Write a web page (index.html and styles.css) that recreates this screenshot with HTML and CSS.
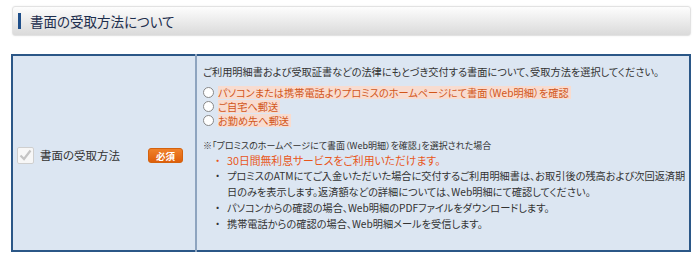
FILE: index.html
```html
<!DOCTYPE html>
<html lang="ja">
<head>
  <meta charset="UTF-8">
  <title>書面の受取方法について</title>
  <link rel="stylesheet" href="styles.css">
</head>
<body>
<div id="page">
  <h2 class="section-title"><span class="title-text">書面の受取方法について</span></h2>

  <table class="form-table">
    <tr>
      <th>
        <div class="label-row">
          <svg class="check-icon" width="17" height="17" viewBox="0 0 17 17">
            <rect x="0.5" y="0.5" width="16" height="16" rx="1.5" fill="#f7f7f7" stroke="#cfcfcf"/>
            <path d="M3.5 8.5 L7 12 L13.5 3.5" fill="none" stroke="#c4c4c4" stroke-width="2.2"/>
          </svg>
          <span class="label-text">書面の受取方法</span>
          <span class="badge">必須</span>
        </div>
      </th>
      <td>
        <p class="intro">ご利用明細書および受取証書などの法律にもとづき交付する書面について、受取方法を選択してください。</p>
        <div class="radio-list">
          <label class="radio-item"><span class="radio"></span><span class="radio-text">パソコンまたは携帯電話よりプロミスのホームページにて書面（Web明細）を確認</span></label>
          <label class="radio-item"><span class="radio"></span><span class="radio-text">ご自宅へ郵送</span></label>
          <label class="radio-item"><span class="radio"></span><span class="radio-text">お勤め先へ郵送</span></label>
        </div>
        <p class="note">※「プロミスのホームページにて書面（Web明細）を確認」を選択された場合</p>
        <ul class="note-list">
          <li class="highlight">30日間無利息サービスをご利用いただけます。</li>
          <li>プロミスのATMにてご入金いただいた場合に交付するご利用明細書は、お取引後の残高および次回返済期日のみを表示します。返済額などの詳細については、Web明細にて確認してください。</li>
          <li>パソコンからの確認の場合、Web明細のPDFファイルをダウンロードします。</li>
          <li>携帯電話からの確認の場合、Web明細メールを受信します。</li>
        </ul>
      </td>
    </tr>
  </table>
</div>
</body>
</html>
```

FILE: styles.css
```css
body {
  margin: 0;
  background-color: #fff;
  font-family: "Noto Sans CJK JP", "Noto Sans", sans-serif;
  color: #333;
}
#page {
  padding: 6px 9px 0 11px;
}
.section-title {
  margin: 0 0 18px 1px;
  height: 28px;
  border: 1px solid #e2e2e2;
  border-radius: 3px;
  background: linear-gradient(#fdfdfd, #dadada);
  box-shadow: 0 0 2px rgba(0,0,0,0.08);
  display: flex;
  align-items: center;
  padding-left: 5px;
}
.title-text {
  border-left: 3px solid #1f4f8a;
  padding-left: 9px;
  height: 16px;
  line-height: 16px;
  font-size: 13.5px;
  font-weight: normal;
  font-feature-settings: "palt";
  color: #1c2d4d;
}
.form-table {
  width: 680px;
  border-collapse: collapse;
  border: 2px solid #2b5787;
  background-color: #dce6f2;
  font-size: 10.2px;
  font-feature-settings: "palt";
}
.form-table th {
  width: 178px;
  padding: 0 0 0 4px;
  border-right: 2px solid #8ea4bf;
  font-weight: normal;
  text-align: left;
  vertical-align: middle;
}
.form-table td {
  padding: 8px 2px 18px 6px;
  vertical-align: top;
}
.label-row {
  display: flex;
  align-items: center;
  padding-top: 4px;
}
.check-icon {
  margin-right: 6px;
}
.label-text {
  font-size: 11.5px;
  color: #333;
  flex: 1;
}
.badge {
  width: 35px;
  height: 15px;
  line-height: 14px;
  text-align: center;
  margin-right: 12px;
  border-radius: 3px;
  background: linear-gradient(#f0822a, #de5e0a);
  border: 1px solid #d4620e;
  box-sizing: border-box;
  color: #fff;
  font-size: 9.5px;
  font-weight: bold;
}
.intro {
  margin: 0 0 5px 0;
  line-height: 16px;
}
.radio-list {
  display: flex;
  flex-direction: column;
  align-items: flex-start;
}
.radio-item {
  display: flex;
  align-items: center;
  height: 14px;
  overflow: hidden;
}
.radio {
  width: 9px;
  height: 9px;
  border: 1px solid #888;
  border-radius: 50%;
  background-color: #fff;
  margin-right: 4px;
}
.radio-text {
  background-color: #f8dcd0;
  color: #d2561a;
  line-height: 13px;
  padding-right: 2px;
}
.note {
  margin: 13px 0 0 0;
  font-size: 9px;
  line-height: 12px;
}
.note-list {
  margin: 0;
  padding: 0 0 0 24px;
  list-style: none;
  line-height: 16px;
}
.note-list li {
  position: relative;
}
.note-list li::before {
  content: "・";
  position: absolute;
  left: -12px;
}
.note-list .highlight {
  color: #e8561a;
  font-size: 10.8px;
}
```
